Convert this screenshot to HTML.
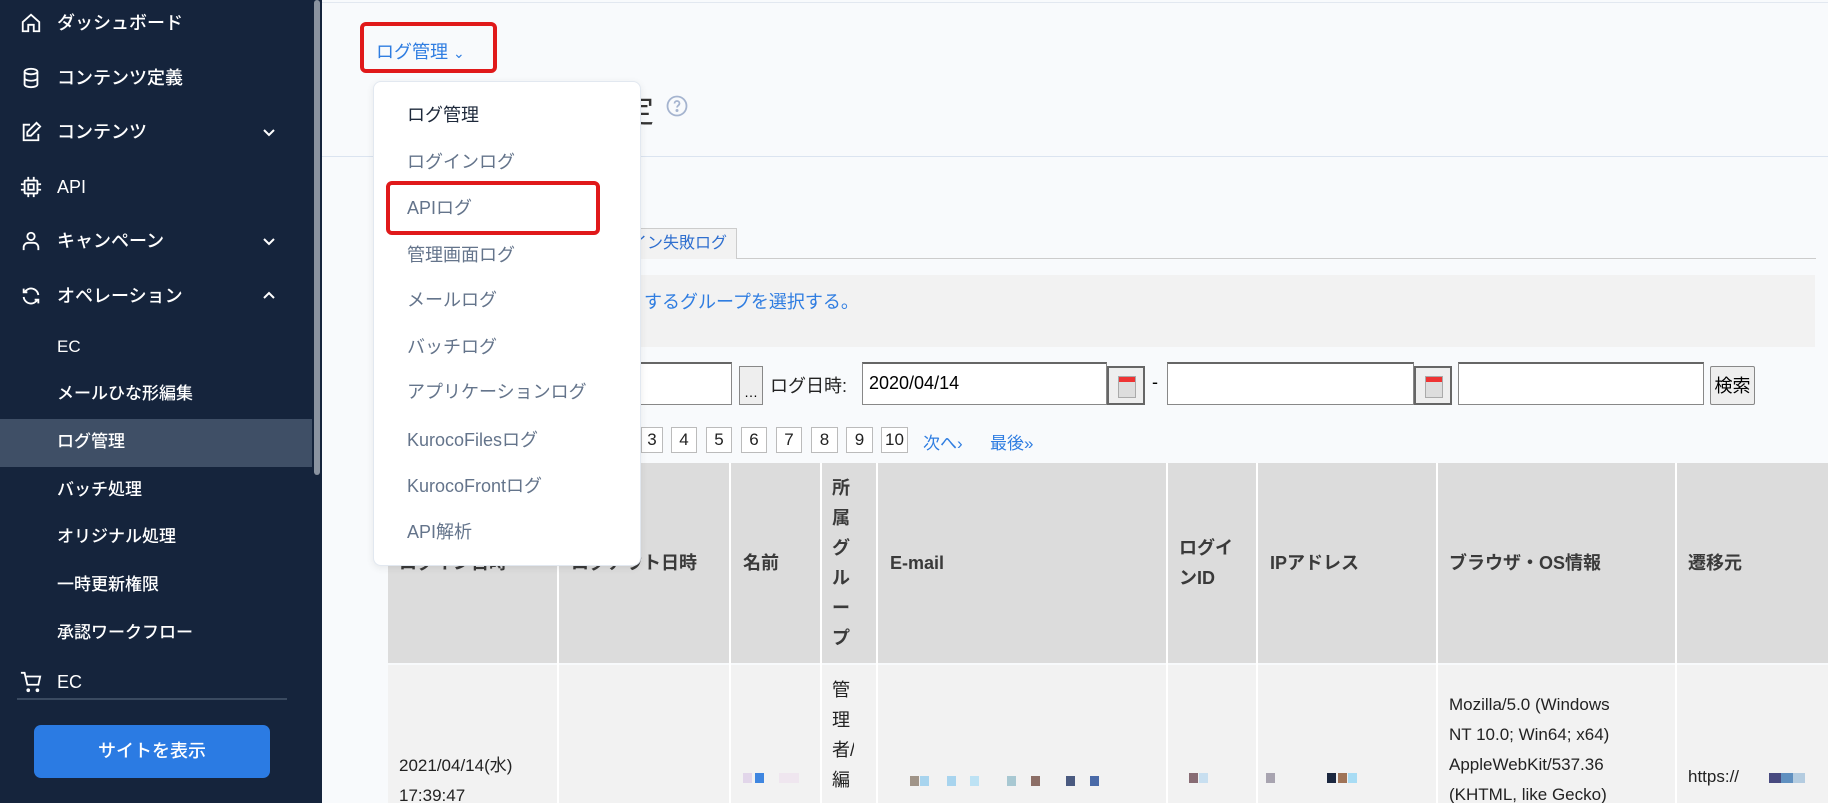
<!DOCTYPE html>
<html style="width:1828px;height:803px;overflow:hidden"><head><meta charset="utf-8"><style>
*{margin:0;padding:0;box-sizing:border-box}
body{width:1828px;height:803px;overflow:hidden;position:relative;background:#f8fafc;font-family:"Liberation Sans","Noto Sans CJK JP",sans-serif;}
.a{position:absolute;white-space:nowrap}
#sb{position:absolute;left:0;top:0;width:322px;height:803px;background:#15243c}
.si{position:absolute;left:57px;color:#fff;font-size:18px;font-weight:500;line-height:24px;transform:translateY(-12px)}
.sub{font-size:17px}
.ic{position:absolute;left:20px;width:22px;height:22px;transform:translateY(-11px)}
.chev{position:absolute;left:262px;width:14px;height:14px;transform:translateY(-7px)}
.dd{position:absolute;left:407px;font-size:18px;color:#64748b;transform:translateY(-12px);line-height:24px}
.th{position:absolute;font-size:18px;font-weight:bold;color:#3a3a3a;line-height:30px}
.pg{position:absolute;top:427px;height:26px;border:1px solid #bbb;background:#fff;font-size:17px;text-align:center;line-height:24px;color:#222}
.inp{position:absolute;top:362px;height:43px;background:#fff;border:1px solid #888;border-top:2px solid #666}
.cal{position:absolute;top:366px;width:38px;height:39px;border:2px solid #666;background:#eee}
.cal:after{content:"";position:absolute;left:9px;top:8px;width:16px;height:20px;background:linear-gradient(#e33 0 5px,#ddd 5px);border:1px solid #aaa}
.px{position:absolute;width:9px;height:10px}
</style></head><body>
<div id="sb">
<svg class="ic" style="top:23px" viewBox="0 0 24 24" fill="none" stroke="#fff" stroke-width="2"><path d="M3 11l9-8 9 8v10h-6v-7h-6v7H3z"/></svg>
<div class="si" style="top:23px">ダッシュボード</div>
<svg class="ic" style="top:78px" viewBox="0 0 24 24" fill="none" stroke="#fff" stroke-width="2"><ellipse cx="12" cy="5" rx="7" ry="3"/><path d="M5 5v14c0 1.7 3 3 7 3s7-1.3 7-3V5M5 12c0 1.7 3 3 7 3s7-1.3 7-3"/></svg>
<div class="si" style="top:78px">コンテンツ定義</div>
<svg class="ic" style="top:132px" viewBox="0 0 24 24" fill="none" stroke="#fff" stroke-width="2"><path d="M11 4H4v17h16v-7M18 2l4 4-10 10H8v-4z"/></svg>
<div class="si" style="top:132px">コンテンツ</div>
<svg class="chev" style="top:132px" viewBox="0 0 14 14" fill="none" stroke="#fff" stroke-width="2"><path d="M2 5l5 5 5-5"/></svg>
<svg class="ic" style="top:187px" viewBox="0 0 24 24" fill="none" stroke="#fff" stroke-width="2"><rect x="5" y="5" width="14" height="14" rx="1"/><rect x="9" y="9" width="6" height="6"/><path d="M9 1v4M15 1v4M9 19v4M15 19v4M1 9h4M1 15h4M19 9h4M19 15h4"/></svg>
<div class="si" style="top:187px">API</div>
<svg class="ic" style="top:241px" viewBox="0 0 24 24" fill="none" stroke="#fff" stroke-width="2"><circle cx="12" cy="7" r="4"/><path d="M4 22v-3a5 5 0 015-5h6a5 5 0 015 5v3"/></svg>
<div class="si" style="top:241px">キャンペーン</div>
<svg class="chev" style="top:241px" viewBox="0 0 14 14" fill="none" stroke="#fff" stroke-width="2"><path d="M2 5l5 5 5-5"/></svg>
<svg class="ic" style="top:296px" viewBox="0 0 24 24" fill="none" stroke="#fff" stroke-width="2"><path d="M20 11a8 8 0 00-15-3M4 4v4h4M4 13a8 8 0 0015 3M20 20v-4h-4"/></svg>
<div class="si" style="top:296px">オペレーション</div>
<svg class="chev" style="top:296px" viewBox="0 0 14 14" fill="none" stroke="#fff" stroke-width="2"><path d="M2 9l5-5 5 5"/></svg>
<div class="si sub" style="top:347px">EC</div>
<div class="si sub" style="top:394px">メールひな形編集</div>
<div style="position:absolute;left:0;top:419px;width:312px;height:48px;background:#3f4f66"></div>
<div class="si sub" style="top:442px">ログ管理</div>
<div class="si sub" style="top:490px">バッチ処理</div>
<div class="si sub" style="top:537px">オリジナル処理</div>
<div class="si sub" style="top:585px">一時更新権限</div>
<div class="si sub" style="top:633px">承認ワークフロー</div>
<svg class="ic" style="top:682px" viewBox="0 0 24 24" fill="none" stroke="#fff" stroke-width="2"><path d="M1 2h4l3 13h12l2-9H7"/><circle cx="9" cy="21" r="1"/><circle cx="19" cy="21" r="1"/></svg>
<div class="si" style="top:682px">EC</div>
<div style="position:absolute;left:17px;top:698px;width:270px;height:2px;background:#3a4a60"></div>
<div style="position:absolute;left:34px;top:725px;width:236px;height:53px;background:#2b7be3;border-radius:7px;color:#fff;font-size:18px;font-weight:500;text-align:center;line-height:53px">サイトを表示</div>
<div style="position:absolute;left:314px;top:0;width:6px;height:475px;background:#8a93a0;border-radius:3px"></div>
</div>
<div style="position:absolute;left:322px;top:2px;right:0;height:1px;background:#e2e8f0"></div>
<div style="position:absolute;left:322px;top:156px;right:0;height:1px;background:#dbe4f0"></div>
<div class="a" style="left:622px;top:86px;font-size:32px;color:#333">定</div>
<svg class="a" style="left:666px;top:95px" width="22" height="22" viewBox="0 0 22 22" fill="none" stroke="#a5b4cf" stroke-width="1.8"><circle cx="11" cy="11" r="9.5"/><path d="M8.5 8.5a2.5 2.5 0 115 0c0 1.8-2.5 2-2.5 4"/><circle cx="11" cy="15.5" r=".6" fill="#a5b4cf"/></svg>
<div style="position:absolute;left:388px;top:258px;width:1428px;height:1px;background:#ccc"></div>
<div class="a" style="left:600px;top:228px;width:137px;height:31px;border:1px solid #ccc;border-bottom:none;background:#f2f2f2;font-size:16px;color:#2f6fcf;line-height:30px;padding-left:30px">イン失敗ログ</div>
<div style="position:absolute;left:388px;top:275px;width:1427px;height:72px;background:#f2f2f2"></div>
<div class="a" style="left:644px;top:288px;font-size:18px;color:#2f7de1">するグループを選択する。</div>
<div class="inp" style="left:560px;width:172px"></div>
<div class="a" style="left:739px;top:366px;width:24px;height:39px;border:1px solid #888;background:#eee;font-size:14px;text-align:center;line-height:50px">…</div>
<div class="a" style="left:770px;top:372px;font-size:18px;color:#222">ログ日時:</div>
<div class="inp" style="left:862px;width:245px;font-size:18px;padding-left:6px;line-height:38px">2020/04/14</div>
<div class="cal" style="left:1107px"></div>
<div class="a" style="left:1152px;top:372px;font-size:18px">-</div>
<div class="inp" style="left:1167px;width:247px"></div>
<div class="cal" style="left:1414px"></div>
<div class="inp" style="left:1458px;width:246px"></div>
<div class="a" style="left:1710px;top:366px;width:45px;height:39px;border:1px solid #888;background:#eee;font-size:18px;text-align:center;line-height:38px;border-radius:2px">検索</div>
<div class="pg" style="left:641px;width:22px">3</div>
<div class="pg" style="left:671px;width:26px">4</div>
<div class="pg" style="left:706px;width:26px">5</div>
<div class="pg" style="left:741px;width:26px">6</div>
<div class="pg" style="left:776px;width:26px">7</div>
<div class="pg" style="left:811px;width:27px">8</div>
<div class="pg" style="left:846px;width:27px">9</div>
<div class="pg" style="left:881px;width:27px">10</div>
<div class="a" style="left:923px;top:429px;font-size:17px;color:#2f7de1">次へ›</div>
<div class="a" style="left:990px;top:429px;font-size:17px;color:#2f7de1">最後»</div>
<div style="position:absolute;left:388px;top:463px;right:0;height:200px;background:#dcdcdc"></div>
<div style="position:absolute;left:388px;top:665px;right:0;height:138px;background:#f2f2f2"></div>
<div style="position:absolute;left:557px;top:463px;width:2px;height:340px;background:#fff"></div>
<div style="position:absolute;left:729px;top:463px;width:2px;height:340px;background:#fff"></div>
<div style="position:absolute;left:820px;top:463px;width:2px;height:340px;background:#fff"></div>
<div style="position:absolute;left:876px;top:463px;width:2px;height:340px;background:#fff"></div>
<div style="position:absolute;left:1166px;top:463px;width:2px;height:340px;background:#fff"></div>
<div style="position:absolute;left:1256px;top:463px;width:2px;height:340px;background:#fff"></div>
<div style="position:absolute;left:1436px;top:463px;width:2px;height:340px;background:#fff"></div>
<div style="position:absolute;left:1675px;top:463px;width:2px;height:340px;background:#fff"></div>
<div class="th" style="left:399px;top:548px">ログイン日時</div>
<div class="th" style="left:571px;top:548px">ログアウト日時</div>
<div class="th" style="left:743px;top:548px">名前</div>
<div class="th" style="left:832px;top:473px;width:20px;white-space:normal;line-height:30px">所属グループ</div>
<div class="th" style="left:890px;top:548px">E-mail</div>
<div class="th" style="left:1179px;top:533px;width:64px;white-space:normal">ログインID</div>
<div class="th" style="left:1270px;top:548px">IPアドレス</div>
<div class="th" style="left:1449px;top:548px">ブラウザ・OS情報</div>
<div class="th" style="left:1688px;top:548px">遷移元</div>
<div class="a" style="left:399px;top:751px;font-size:17px;line-height:30px;color:#222">2021/04/14(水)<br>17:39:47</div>
<div class="a" style="left:832px;top:675px;width:22px;height:128px;overflow:hidden;white-space:normal;font-size:18px;line-height:30px;color:#222">管理者/編</div>
<div class="a" style="left:1449px;top:690px;font-size:17px;line-height:30px;color:#222">Mozilla/5.0 (Windows<br>NT 10.0; Win64; x64)<br>AppleWebKit/537.36<br>(KHTML, like Gecko)</div>
<div class="a" style="left:1688px;top:767px;font-size:17px;color:#222">https://</div>
<div class="px" style="left:743px;top:773px;background:#e2d6ea"></div><div class="px" style="left:755px;top:773px;background:#3f86e0"></div><div class="px" style="left:779px;top:773px;background:#efe6ef;width:20px"></div>
<div class="px" style="left:910px;top:776px;background:#a09488"></div><div class="px" style="left:920px;top:776px;background:#a8d4ee"></div><div class="px" style="left:947px;top:776px;background:#a8d4ee"></div><div class="px" style="left:970px;top:776px;background:#bde2f4"></div><div class="px" style="left:1007px;top:776px;background:#a8c8d2"></div><div class="px" style="left:1031px;top:776px;background:#8c6e66"></div><div class="px" style="left:1066px;top:776px;background:#4a5a80"></div><div class="px" style="left:1090px;top:776px;background:#4a6aa8"></div>
<div class="px" style="left:1189px;top:773px;background:#886c74"></div><div class="px" style="left:1199px;top:773px;background:#c8dff0"></div><div class="px" style="left:1266px;top:773px;background:#a8a4b0"></div><div class="px" style="left:1327px;top:773px;background:#1c2840"></div><div class="px" style="left:1338px;top:773px;background:#a07458"></div><div class="px" style="left:1348px;top:773px;background:#a8dcf4"></div>
<div class="px" style="left:1769px;top:773px;background:#484a80;width:12px"></div><div class="px" style="left:1781px;top:773px;background:#6090c0;width:12px"></div><div class="px" style="left:1793px;top:773px;background:#b4cce0;width:12px"></div>
<div class="a" style="left:376px;top:38px;font-size:18px;color:#2f7de1">ログ管理 <span style="font-size:14px">⌄</span></div>
<div style="position:absolute;left:360px;top:22px;width:137px;height:51px;border:4px solid #e0191a;border-radius:6px"></div>
<div style="position:absolute;left:373px;top:81px;width:268px;height:485px;background:#fff;border:1px solid #e2e8f0;border-radius:8px;box-shadow:0 2px 8px rgba(0,0,0,.08)"></div>
<div class="dd" style="top:115px;color:#1e293b">ログ管理</div>
<div class="dd" style="top:162px">ログインログ</div>
<div class="dd" style="top:208px">APIログ</div>
<div class="dd" style="top:255px">管理画面ログ</div>
<div class="dd" style="top:300px">メールログ</div>
<div class="dd" style="top:347px">バッチログ</div>
<div class="dd" style="top:392px">アプリケーションログ</div>
<div class="dd" style="top:440px">KurocoFilesログ</div>
<div class="dd" style="top:486px">KurocoFrontログ</div>
<div class="dd" style="top:532px">API解析</div>
<div style="position:absolute;left:386px;top:181px;width:214px;height:54px;border:4px solid #e0191a;border-radius:6px"></div>
</body></html>
